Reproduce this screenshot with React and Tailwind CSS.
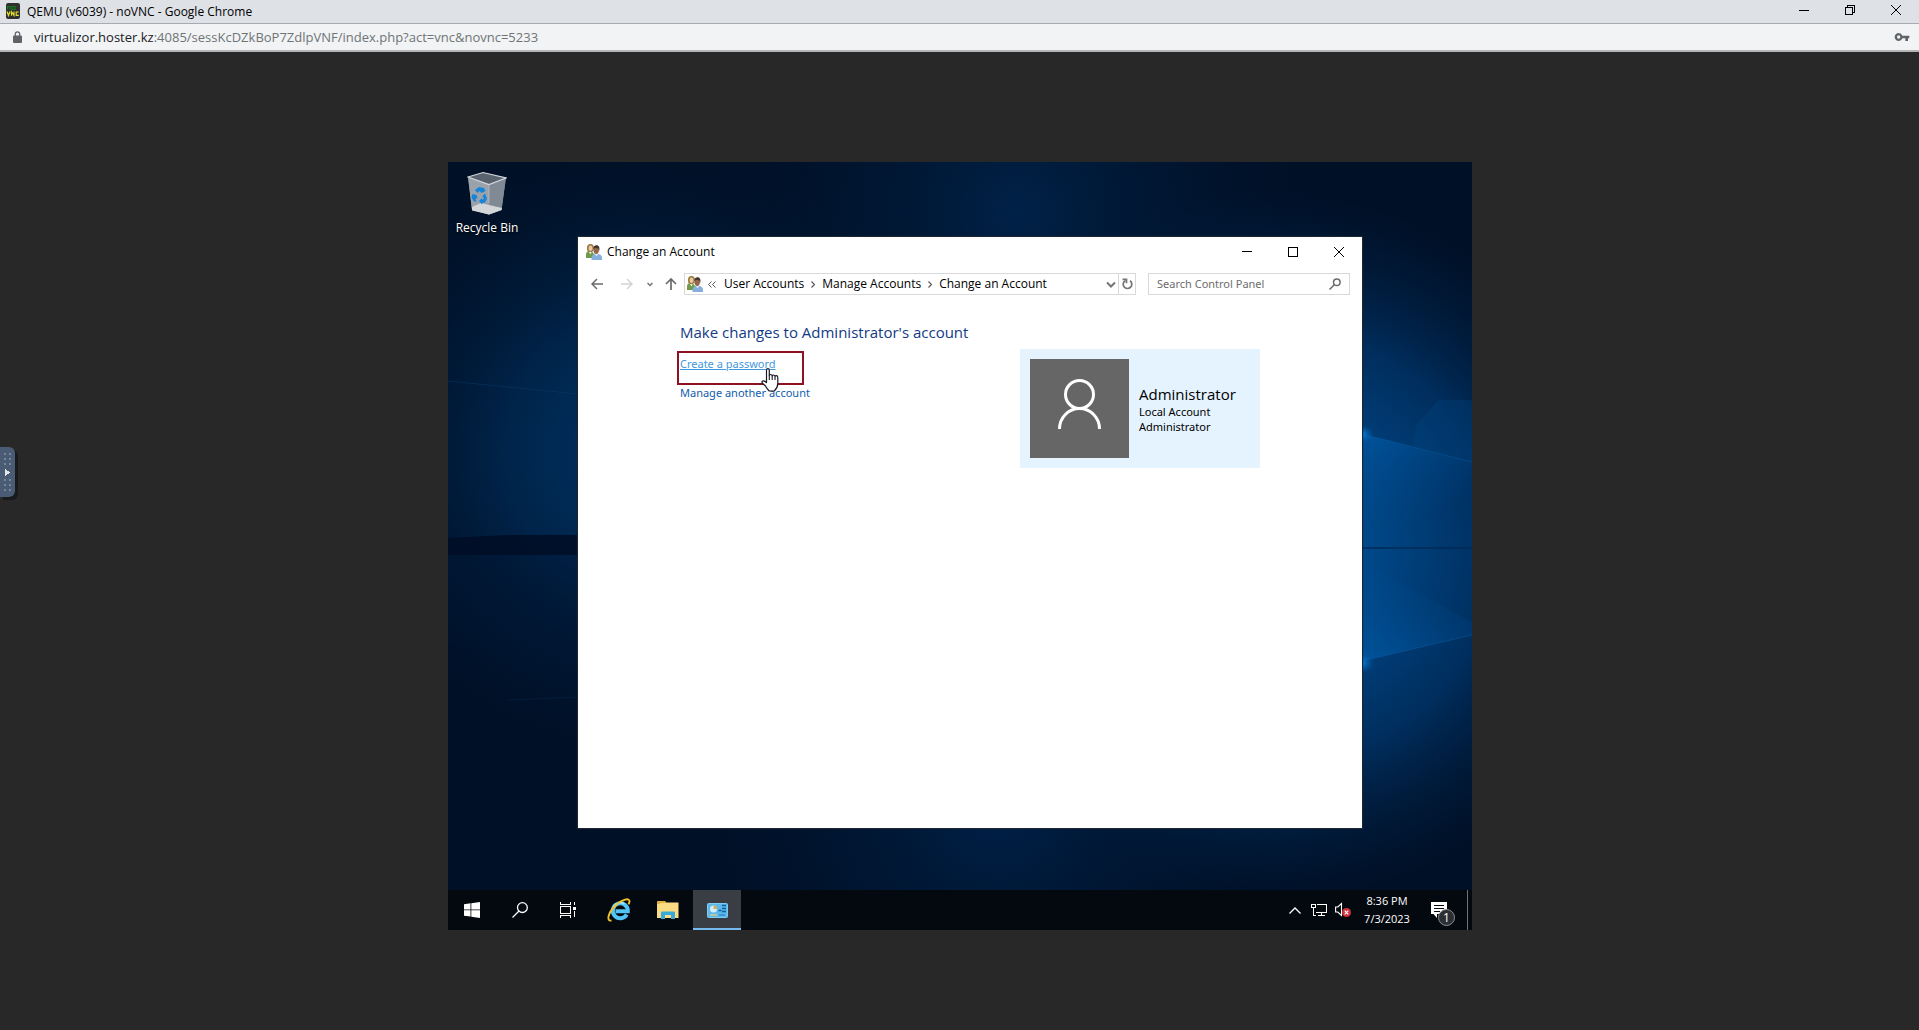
const crumbs = ["User Accounts", "Manage Accounts", "Change an Account"]

function PeopleIcon() {
  return (
    <svg className="w-4 h-4 shrink-0" viewBox="0 0 16 16">
      <path d="M0 14V10.500Q0 7.500 2.500 7L6 7.500 8 10v4z" fill="#6f9a4c" />
      <path d="M2.500 7.500l2 3L6 7.500z" fill="#e4edd5" />
      <path d="M1.200 6.500C.3 2 1.800 0 4.500 0S8.400 2 7.500 6.500L6 8H3z" fill="#9c7c40" />
      <ellipse cx="4.600" cy="4.300" rx="1.900" ry="2.800" fill="#e9c9a0" />
      <path d="M5.500 16v-2Q5.500 11 8.500 10h4Q16 10.800 16 14v2z" fill="#86afdd" />
      <path d="M8.800 9.800l1.800 2.700 1.600-2.700z" fill="#e3eefa" />
      <ellipse cx="10.200" cy="6" rx="2.700" ry="4" fill="#94674a" />
      <path d="M7.400 5.500C7 2.500 8.500 1.200 10.500 1.200S14 2.800 13.300 7L12.300 4.600 9 3.800z" fill="#43352c" />
    </svg>
  )
}

function BrowserHeader() {
  return (
    <header className="font-['Open_Sans','Noto_Sans',sans-serif]">
      <div className="h-6 bg-[#dee1e6] border-b border-[#a9abae] flex items-start">
        <svg className="w-[14px] h-4 ml-[6px] mt-[3px]" viewBox="0 0 14 16">
          <rect width="14" height="16" rx="2" fill="#303030" />
          <path d="M1.500 6.500v-3h2.500v3M6 3.500h3v3H6z" stroke="#117a1c" strokeWidth="1.200" fill="none" />
          <path d="M1 8.500l1.500 4 1.500-4M5.500 12.800V8.800l2.500 3.500V8.500M12.800 9h-2.600v3.300h2.600" stroke="#e6e02a" strokeWidth="1.200" fill="none" />
        </svg>
        <h1 className="flex-1 ml-[7px] text-[12px] leading-[23px] text-black">QEMU (v6039) - noVNC - Google Chrome</h1>
        <button aria-label="Minimize" className="w-[46px] h-5 grid place-items-center">
          <svg className="w-[10px] h-[10px]" viewBox="0 0 10 10" shapeRendering="crispEdges"><path d="M0 5.500h10" stroke="#000" /></svg>
        </button>
        <button aria-label="Restore" className="w-[46px] h-5 grid place-items-center">
          <svg className="w-[10px] h-[10px]" viewBox="0 0 10 10" shapeRendering="crispEdges">
            <path d="M.5 2.500h7v7h-7zM2.500 2.500v-2h7v7h-2" stroke="#000" fill="none" />
          </svg>
        </button>
        <button aria-label="Close" className="w-[46px] h-5 grid place-items-center">
          <svg className="w-[10px] h-[10px]" viewBox="0 0 10 10"><path d="M0 0l10 10M10 0L0 10" stroke="#000" /></svg>
        </button>
      </div>
      <div className="h-[28px] bg-[#f1f3f4] border-b-2 border-[#b4b5b6] flex items-center pl-[13px] pr-[9px]">
        <svg className="w-[9px] h-3" viewBox="0 0 9 12">
          <path d="M1 4.500h7a1 1 0 0 1 1 1V11a1 1 0 0 1-1 1H1a1 1 0 0 1-1-1V5.500a1 1 0 0 1 1-1z" fill="#5f6368" />
          <path d="M2.300 5V3a2.200 2.200 0 0 1 4.400 0v2" stroke="#5f6368" strokeWidth="1.200" fill="none" />
        </svg>
        <p className="flex-1 ml-3 text-[13px] leading-5 text-[#6f7377]">
          <span className="text-[#202124]">virtualizor.hoster.kz</span>:4085/sessKcDZkBoP7ZdlpVNF/index.php?act=vnc&amp;novnc=5233
        </p>
        <button aria-label="Saved passwords">
          <svg className="w-4 h-4" viewBox="0 0 24 24" fill="#5f6368">
            <path d="M12.650 10A6 6 0 0 0 7 6c-3.310 0-6 2.690-6 6s2.690 6 6 6a6 6 0 0 0 5.650-4H17v4h4v-4h2v-4zM7 14.500a2.500 2.500 0 1 1 0-5 2.500 2.500 0 0 1 0 5z" />
          </svg>
        </button>
      </div>
    </header>
  )
}

function Wallpaper() {
  return (
    <svg className="absolute inset-0 w-full h-full" viewBox="0 0 1024 768" preserveAspectRatio="none" aria-hidden="true">
      <defs>
        <radialGradient id="glow" gradientUnits="userSpaceOnUse" cx="830" cy="0" r="360" gradientTransform="translate(0 385)">
          <stop offset="0" stopColor="#005ba8" />
          <stop offset=".3" stopColor="#004482" />
          <stop offset=".6" stopColor="#002e5e" />
          <stop offset="1" stopColor="#001a3a" stopOpacity="0" />
        </radialGradient>
        <radialGradient id="left" gradientUnits="userSpaceOnUse" cx="190" cy="290" r="330">
          <stop offset="0" stopColor="#003364" />
          <stop offset=".4" stopColor="#00244a" />
          <stop offset="1" stopColor="#001128" stopOpacity="0" />
        </radialGradient>
        <radialGradient id="soft" gradientUnits="userSpaceOnUse" cx="570" cy="50" r="340">
          <stop offset="0" stopColor="#002650" stopOpacity=".8" />
          <stop offset="1" stopColor="#001128" stopOpacity="0" />
        </radialGradient>
        <radialGradient id="floor" gradientUnits="userSpaceOnUse" cx="550" cy="640" r="340">
          <stop offset="0" stopColor="#002149" />
          <stop offset="1" stopColor="#001128" stopOpacity="0" />
        </radialGradient>
        <radialGradient id="spark">
          <stop offset="0" stopColor="#0b7fdc" />
          <stop offset="1" stopColor="#0060b0" stopOpacity="0" />
        </radialGradient>
        <linearGradient id="upper" x1="0" y1="0" x2=".5" y2="1">
          <stop offset="0" stopColor="#0062b4" stopOpacity=".6" />
          <stop offset="1" stopColor="#004a8c" stopOpacity="0" />
        </linearGradient>
        <linearGradient id="lower" x1="0" y1="1" x2=".5" y2="0">
          <stop offset="0" stopColor="#0062b4" stopOpacity=".6" />
          <stop offset="1" stopColor="#004a8c" stopOpacity="0" />
        </linearGradient>
      </defs>
      <rect width="1024" height="768" fill="#001026" />
      <rect width="1024" height="768" fill="url(#left)" />
      <rect width="1024" height="768" fill="url(#soft)" />
      <rect width="1024" height="768" fill="url(#floor)" />
      <rect width="1024" height="768" fill="url(#glow)" />
      <path d="M914 272l110 28v60H914z" fill="url(#upper)" />
      <path d="M914 400l110 60v13l-110 26z" fill="url(#lower)" />
      <path d="M914 272l110 28M914 499l110-26" stroke="#1268b0" strokeOpacity=".35" />
      <path d="M990 238h34v62l-60-15 4-22z" fill="#004a8c" opacity=".25" />
      <ellipse cx="914" cy="272" rx="12" ry="9" fill="url(#spark)" />
      <ellipse cx="914" cy="501" rx="12" ry="10" fill="url(#spark)" />
      <path d="M914 386h110" stroke="#002a54" strokeWidth="2" strokeOpacity=".7" />
      <path d="M0 376l60-3h70v20H0z" fill="#000d24" opacity=".85" />
      <path d="M0 393h130v140L0 480z" fill="#001330" opacity=".35" />
      <path d="M0 219l130 13" stroke="#0a3c68" strokeOpacity=".5" />
      <path d="M60 538l70-3" stroke="#0a3460" strokeOpacity=".35" />
    </svg>
  )
}

function RecycleBin() {
  return (
    <button className="absolute left-0 top-[9px] w-[78px] flex flex-col items-center">
      <svg className="w-[40px] h-[44px]" viewBox="0 0 40 44">
        <path d="M1 6L22 14l17-8-4.500 33L22 43.500 5 39z" fill="#8c959e" />
        <path d="M1 6l21 7v30.500L5 38.500z" fill="#9aa3ac" />
        <path d="M39 6l-17 7v30.500l12.500-4.500z" fill="#808a95" />
        <path d="M5 36l9-4 8 2 13 3-.5 2L22 43.500 5 39.500z" fill="#d3d6d8" />
        <path d="M1 6L16 1.500 39 7l-17 6.500z" fill="#59626f" stroke="#d4d8dc" strokeWidth="1.200" />
        <path d="M22 14v18" stroke="#b4bbc2" strokeWidth=".8" />
        <path d="M8 19l4-3 5 1 1.500 3-4 2-2-2-2 2zM5.500 23l4 1 1 3-2 1 1 3-3-1-2-4zM18 22.500l2 5-2 4-2.500.5-.5 1.500-3-3.500 3-3v1.500l2-.5-1.500-3z" fill="#1583d8" />
      </svg>
      <span className="mt-[5px] text-[12px] leading-4 text-white [text-shadow:0_1px_2px_#000]">Recycle Bin</span>
    </button>
  )
}

function TitleBar() {
  return (
    <div className="h-[29px] flex items-center pl-2">
      <PeopleIcon />
      <h2 className="flex-1 ml-[5px] text-[12px] leading-4 text-black">Change an Account</h2>
      <button aria-label="Minimize window" className="w-[46px] h-7 grid place-items-center">
        <svg className="w-[10px] h-[10px]" viewBox="0 0 10 10" shapeRendering="crispEdges"><path d="M0 4.500h10" stroke="#000" /></svg>
      </button>
      <button aria-label="Maximize window" className="w-[46px] h-7 grid place-items-center">
        <svg className="w-[10px] h-[10px]" viewBox="0 0 10 10" shapeRendering="crispEdges"><path d="M.5.5h9v9h-9z" stroke="#000" fill="none" /></svg>
      </button>
      <button aria-label="Close window" className="w-[46px] h-7 grid place-items-center">
        <svg className="w-[10px] h-[10px]" viewBox="0 0 10 10"><path d="M0 0l10 10M10 0L0 10" stroke="#000" /></svg>
      </button>
    </div>
  )
}

function NavBar() {
  return (
    <div className="mt-[7px] h-[22px] flex items-stretch pl-1 pr-3">
      <button aria-label="Back" className="w-[30px] grid place-items-center">
        <svg className="w-3 h-3" viewBox="0 0 12 12" fill="none" stroke="#6b6b6b" strokeWidth="1.500"><path d="M12 6H1M6 1L1 6l5 5" /></svg>
      </button>
      <button aria-label="Forward" className="w-[30px] grid place-items-center">
        <svg className="w-3 h-3" viewBox="0 0 12 12" fill="none" stroke="#d4d4d4" strokeWidth="1.500"><path d="M0 6h11M6 1l5 5-5 5" /></svg>
      </button>
      <button aria-label="Recent locations" className="w-4 grid place-items-center">
        <svg className="w-[6px] h-[5px]" viewBox="0 0 6 5" fill="none" stroke="#757575" strokeWidth="1.500"><path d="M.5 1L3 3.500 5.500 1" /></svg>
      </button>
      <button aria-label="Up" className="w-[26px] grid place-items-center">
        <svg className="w-3 h-3" viewBox="0 0 12 12" fill="none" stroke="#6b6b6b" strokeWidth="1.700"><path d="M6 12V1M1 6l5-5 5 5" /></svg>
      </button>

      {/* address */}
      <div className="flex-1 border border-[#d9d9d9] flex items-center pl-[2px]">
        <PeopleIcon />
        <svg className="ml-[5px] mr-2 w-2 h-[7px]" viewBox="0 0 8 7" fill="none" stroke="#555"><path d="M3.500.5l-3 3 3 3M7.500.5l-3 3 3 3" /></svg>
        <ol className="flex-1 flex items-center text-[12px] leading-4 text-black">
          {crumbs.map((c, i) => (
            <li key={c} className="flex items-center">
              {i > 0 && (
                <svg className="mx-[7px] w-1 h-[7px]" viewBox="0 0 4 7" fill="none" stroke="#555" strokeWidth="1.200"><path d="M.5.500l3 3-3 3" /></svg>
              )}
              <a href="#">{c}</a>
            </li>
          ))}
        </ol>
        <button aria-label="Previous locations" className="w-[15px] h-full grid place-items-center">
          <svg className="w-[10px] h-[7px]" viewBox="0 0 10 7" fill="none" stroke="#757575" strokeWidth="2"><path d="M1 1.500l4 4 4-4" /></svg>
        </button>
        <button aria-label="Refresh" className="w-[17px] h-full border-l border-[#d9d9d9] grid place-items-center">
          <svg className="w-[11px] h-3" viewBox="0 0 11 12" fill="none" stroke="#757575" strokeWidth="1.700">
            <path d="M8 2.700a4.300 4.300 0 1 1-4.500-.3" />
            <path d="M.5 1.300h4v4" />
          </svg>
        </button>
      </div>

      <div className="ml-3 w-[202px] border border-[#d9d9d9] flex items-center">
        <input
          aria-label="Search Control Panel"
          placeholder="Search Control Panel"
          className="flex-1 min-w-0 pl-2 text-[11px] leading-4 text-black placeholder:text-[#6d6d6d] outline-none font-['Noto_Sans',sans-serif]"
        />
        <button aria-label="Search" className="mr-2 w-3 h-full grid place-items-center">
          <svg className="w-3 h-3" viewBox="0 0 12 12" fill="none" stroke="#6b6b6b" strokeWidth="1.500"><circle cx="7.800" cy="4.200" r="3.300" /><path d="M5.500 6.500L.5 11.500" /></svg>
        </button>
      </div>
    </div>
  )
}

function AccountWindow() {
  return (
    <section className="absolute left-[130px] right-[110px] top-[75px] bottom-[62px] bg-white shadow-[0_0_1px_1px_#1c2733]">
      <TitleBar />
      <NavBar />
      <div className="px-[102px] pt-[25px]">
        <h3 className="text-[15px] leading-6 text-[#123a85]">Make changes to Administrator's account</h3>
        <div className="mt-[5px] flex justify-between items-start font-['Noto_Sans',sans-serif] text-[11px]">
          <div className="pt-[2px]">
            <div className="relative -ml-[3px] w-[127px] h-[34px] border-2 border-[#8f1224] pl-px">
              <a href="#" className="block leading-[22px] text-[#4398dd] underline">Create a password</a>
              <svg className="absolute left-[82px] top-[15px] w-[18px] h-[24px] z-10" viewBox="0 0 18 24">
                <path
                  d="M5.500 14.500V2.200q0-1.600 1.400-1.600t1.400 1.600V7.500q.3-1 1.400-1t1.500 1.300q.4-.8 1.400-.8t1.400 1.300q.4-.6 1.300-.6 1.500 0 1.500 1.700v6q0 4-3.500 7.600H8.200Q6 21 4.500 18L1.200 15Q.6 13.200 2 12.800q1.800-.2 3.500 1.700z"
                  fill="#fff" stroke="#1a1a26" strokeWidth="1.200" strokeLinejoin="round"
                />
                <path d="M8.300 7.500V12M11.200 8v4M14 8.500V12" stroke="#1a1a26" strokeWidth="1.100" />
              </svg>
            </div>
            <a href="#" className="block leading-4 text-[#0f5cae]">Manage another account</a>
          </div>

          <div className="w-[240px] bg-[#e5f3ff] p-[10px] flex items-center gap-[10px] text-black">
            <svg className="w-[99px] h-[99px] shrink-0 bg-[#666]" viewBox="0 0 99 99" fill="none" stroke="#fff" strokeWidth="3">
              <circle cx="49.500" cy="35.500" r="14" />
              <path d="M29.500 70a20 20.500 0 0 1 40 0" />
            </svg>
            <div className="pt-px leading-[15px]">
              <p className="font-['Open_Sans',sans-serif] text-[15px] leading-5">Administrator</p>
              <p>Local Account</p>
              <p>Administrator</p>
            </div>
          </div>
        </div>
      </div>
    </section>
  )
}

function Taskbar() {
  return (
    <footer className="relative h-10 bg-[#04080f] flex items-stretch text-white">
      <button aria-label="Start" className="w-12 grid place-items-center">
        <svg className="w-4 h-4" viewBox="0 0 16 16" fill="#fff"><path d="M0 2.200l6.500-.9v6.200H0zM7.300 1.200L16 0v7.500H7.300zM0 8.300h6.500v6.300L0 13.800zM7.300 8.300H16V16l-8.700-1.200z" /></svg>
      </button>
      <button aria-label="Search" className="w-12 grid place-items-center">
        <svg className="w-4 h-4" viewBox="0 0 16 16" fill="none" stroke="#fff" strokeWidth="1.300"><circle cx="10.400" cy="5.600" r="4.900" /><path d="M7 9L.5 15.500" /></svg>
      </button>
      <button aria-label="Task View" className="w-12 grid place-items-center">
        <svg className="w-4 h-4" viewBox="0 0 16 16" fill="none" stroke="#fff" shapeRendering="crispEdges">
          <path d="M.5 0v2.500h10V0M.5 4.500h10v7H.5zM.5 16v-2.500h10V16M14.500 0v3M14.500 9v6" />
          <path d="M13 4.500h3v3h-3z" fill="#fff" stroke="none" />
        </svg>
      </button>
      <button aria-label="Internet Explorer" className="ml-[3px] w-12 grid place-items-center">
        <svg className="w-6 h-6" viewBox="0 0 24 24" fill="none">
          <path d="M19.800 16.500a7.500 7.500 0 1 1 1-3.300H8.500" stroke="#52c4f5" strokeWidth="4" />
          <path d="M6.500 8.500A8 8 0 0 1 17.500 6" stroke="#a5e6ff" strokeWidth="1.500" />
          <path d="M4.500 22.500C-1 23.500 1 15 8 8S23-.5 22.500 3.500q-.2 1.200-1 2.800" stroke="#f2c32c" strokeWidth="1.900" />
        </svg>
      </button>
      <button aria-label="File Explorer" className="ml-px w-12 grid place-items-center">
        <svg className="w-[22px] h-[18px]" viewBox="0 0 22 18">
          <path d="M0 1.500Q0 0 1 0h7l1 1.500h12.500V17H0z" fill="#fbdc83" />
          <path d="M0 1.500Q0 0 1 0h7l1 2H3v1H0z" fill="#e5b13c" />
          <path d="M4 18v-6.500q0-1 1-1h12q1 0 1 1V18h-4v-4H8v4z" fill="#39a9dc" />
        </svg>
      </button>
      <button aria-label="Control Panel" className="ml-px w-12 bg-[#3a3d43] border-b-2 border-[#76b9ed] grid place-items-center pt-[2px]">
        <svg className="w-[21px] h-[15px]" viewBox="0 0 21 15">
          <rect x=".5" y=".5" width="20" height="14" rx="1" fill="#5cb8ea" stroke="#7fcdf4" />
          <circle cx="6.500" cy="6" r="3.500" fill="#d4eefb" />
          <path d="M6.500 6V2.500A3.500 3.500 0 0 1 10 6z" fill="#d9a94c" />
          <path d="M11.500 7.500h3M15 2.500h4M15 5.500h4M15 8.500h4" stroke="#125f9e" strokeWidth="1.400" />
          <path d="M3 12h7" stroke="#e2d27a" strokeWidth="1.300" />
          <path d="M12 12h6" stroke="#2f86c0" strokeWidth="1.300" />
        </svg>
      </button>

      {/* tray */}
      <button aria-label="Show hidden icons" className="ml-auto w-[18px] grid place-items-center">
        <svg className="w-3 h-[7px]" viewBox="0 0 12 7" fill="none" stroke="#fff" strokeWidth="1.300"><path d="M.5 6.500L6 1l5.500 5.500" /></svg>
      </button>
      <button aria-label="Network" className="w-[30px] grid place-items-center">
        <svg className="w-4 h-[14px]" viewBox="0 0 16 14" fill="none" stroke="#fff" shapeRendering="crispEdges">
          <path d="M6 1.500h9.500v8H4.500M10.500 10v3M7 12.500h7M.5 1.500h4v3h-4zM2.500 5v7.500H5" />
        </svg>
      </button>
      <button aria-label="Volume muted" className="w-5 grid place-items-center">
        <svg className="w-[18px] h-4" viewBox="0 0 18 16" fill="none">
          <path d="M.6 5h2.200L6.500 1.500v12L2.800 10H.6z" stroke="#fff" strokeWidth="1.100" />
          <circle cx="11.500" cy="10.500" r="4.500" fill="#d0323c" />
          <path d="M9.700 8.700l3.600 3.600M13.300 8.700l-3.600 3.600" stroke="#fff" strokeWidth="1.200" />
        </svg>
      </button>
      <button className="w-[66px] text-[11px] leading-[18px] text-center">
        <time className="block">8:36 PM</time>
        <time className="block">7/3/2023</time>
      </button>
      <button aria-label="Notifications" className="relative w-[47px] grid place-items-center">
        <svg className="w-[25px] h-6" viewBox="0 0 25 24">
          <path d="M0 4h16v12H6v4l-3.500-4H0z" fill="#fff" />
          <path d="M3 7.500h10M3 10.500h10M3 13.500h6" stroke="#04080f" />
        </svg>
        <span className="absolute left-[18px] top-[19px] w-[17px] h-[17px] rounded-full border border-[#8a8d92] bg-[#2b2e33] text-[12px] leading-[15px] text-center">1</span>
      </button>
      <button aria-label="Show desktop" className="w-[5px] border-l border-[#70747a]" />
    </footer>
  )
}

function ControlHandle() {
  return (
    <button aria-label="Open noVNC controls" className="absolute left-0 top-[395px] w-[15px] h-[50px] rounded-r-md bg-[#4a5b74] shadow-[3px_3px_0_#181a1d]">
      <svg className="w-[15px] h-[50px]" viewBox="0 0 15 50" shapeRendering="crispEdges">
        <path d="M5 6v14M10 6v14M5 32v14M10 32v14" stroke="#77869c" strokeWidth="2" strokeDasharray="2 3" />
        <path d="M5 22l5 3.500L5 29z" fill="#e4e6ea" />
      </svg>
    </button>
  )
}

export default function App() {
  return (
    <div className="min-h-screen flex flex-col bg-[#282828]">
      <BrowserHeader />
      <main className="relative flex-1 flex justify-center items-start pl-px pt-[110px] pb-[100px] font-['Open_Sans','Noto_Sans',sans-serif]">
        <ControlHandle />
        <div className="relative w-full max-w-[1024px] aspect-[4/3] flex flex-col overflow-hidden">
          <Wallpaper />
          <div className="relative flex-1">
            <RecycleBin />
            <AccountWindow />
          </div>
          <Taskbar />
        </div>
      </main>
    </div>
  )
}
